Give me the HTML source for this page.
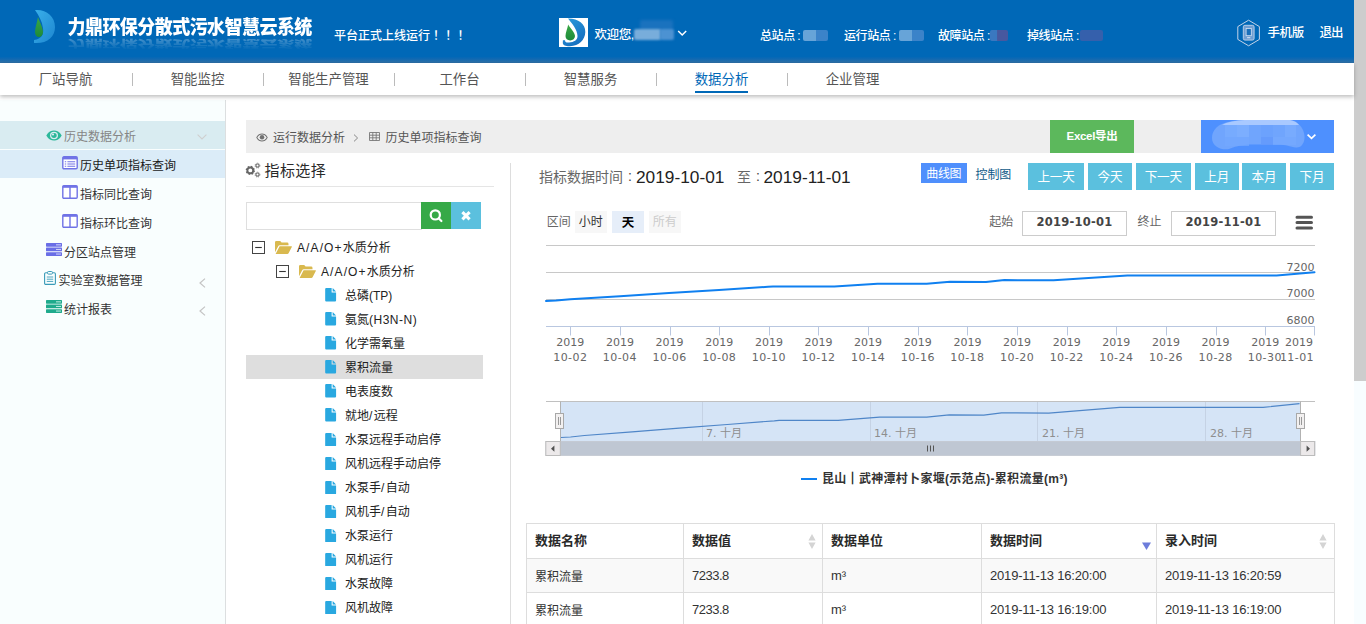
<!DOCTYPE html>
<html lang="zh-CN">
<head>
<meta charset="utf-8">
<title>力鼎环保分散式污水智慧云系统</title>
<style>
*{box-sizing:border-box;margin:0;padding:0}
html,body{width:1366px;height:624px;overflow:hidden;background:#fff}
body{position:relative;font-family:"Liberation Sans","Noto Sans CJK SC",sans-serif;font-size:13px;color:#393939}
.abs{position:absolute;white-space:nowrap}
/* header */
#hdr{position:absolute;left:0;top:0;width:1354px;height:63px;background:linear-gradient(#0068b7 0,#0068b7 56.5px,#1169b2 59px,#2a70a9 62px,#2b6ca3 63px)}
#hdr .t{position:absolute;color:#fff;white-space:nowrap;font-weight:500}
#hdr #title{left:67.5px;top:13px;font-size:18px;font-weight:900;line-height:30px;letter-spacing:-.55px;transform-origin:0 50%;transform:scale(1,1.07)}
#hdr #title2{left:67.5px;top:28px;font-size:18px;font-weight:900;line-height:30px;letter-spacing:-.55px;transform-origin:0 50%;transform:scale(1,-.55);opacity:.3;-webkit-mask-image:linear-gradient(to top,#000 15%,transparent 92%);mask-image:linear-gradient(to top,#000 15%,transparent 92%)}
.blur{position:absolute;border-radius:2px}
/* nav */
#nav{position:absolute;left:0;top:63px;width:1354px;height:32px;background:#fff;box-shadow:0 2px 4px rgba(0,0,0,.25);z-index:5}
#nav a{position:absolute;top:0;width:131px;height:32px;line-height:33px;text-align:center;font-size:13.4px;color:#555;text-decoration:none}
#nav i{position:absolute;top:10px;width:1px;height:13px;background:#bbb}
#nav a.on{color:#0068b7}
#nav a.on:after{content:"";position:absolute;left:39px;width:53px;top:28px;height:2px;background:#0068b7}
/* sidebar */
#side{position:absolute;left:0;top:100px;width:226px;height:524px;background:#f9fefe;border-right:1px solid #dcdfe0}
#side .r{position:absolute;left:0;margin-top:-5px;width:225px;height:29px;line-height:32px;font-size:12px;color:#333;white-space:nowrap}
#side svg{position:absolute}
/* main */
#crumb{position:absolute;left:246px;top:120px;width:1088px;height:33px;background:#eee;line-height:33px;font-size:13px;color:#555}
.tree .n{position:absolute;font-size:12px;color:#222;white-space:nowrap;line-height:25px;height:24px}
.btnc{position:absolute;top:163px;height:27px;line-height:29.5px;background:#5bc0de;color:#fff;font-size:12.6px;text-align:center;letter-spacing:-.2px}
table{border-collapse:collapse}
#tbl{position:absolute;left:526px;top:523px;width:807.5px;table-layout:fixed}
#tbl th,#tbl td{border:1px solid #ddd;height:34px;padding:0 0 0 8px;text-align:left;font-size:12px;color:#333;white-space:nowrap}
#tbl th{font-weight:bold;font-size:13px;height:35px;color:#2a2a2a;padding-bottom:3px}
#tbl td.n{font-size:13px;letter-spacing:-.18px}
#tbl td.v{font-size:13px;letter-spacing:-.5px}
</style>
</head>
<body>
<!-- ============ HEADER ============ -->
<div id="hdr">
  <svg class="abs" style="left:30px;top:8px" width="28" height="38" viewBox="0 0 28 38">
    <defs><linearGradient id="lg1" x1="0" y1="0" x2="1" y2="1"><stop offset="0" stop-color="#3ab0ea"/><stop offset="1" stop-color="#1d86d0"/></linearGradient>
    <linearGradient id="lg2" x1="0" y1="0" x2="0" y2="1"><stop offset="0" stop-color="#3aa845"/><stop offset="1" stop-color="#1d8a3a"/></linearGradient></defs>
    <path d="M5 2 C16 1 25 8 25 19 C25 29 17 36 4 35 L4 32 C12 31 14 26 13 20 C12 13 9 8 5 2 Z" fill="url(#lg1)"/>
    <path d="M8 9 C10 15 13 20 13 24 C13 27 11 29 9 29 C6.5 29 5 27 5 24 C5 20 7 15 8 9 Z" fill="url(#lg2)"/>
  </svg>
  <div class="t" id="title">力鼎环保分散式污水智慧云系统</div>
  <div class="t" id="title2">力鼎环保分散式污水智慧云系统</div>
  <div class="t" style="left:334px;top:27.3px;font-size:12px;line-height:18px">平台正式上线运行<span style="margin-left:3px;letter-spacing:.3px">！！！</span></div>
  <div class="abs" style="left:559px;top:18px;width:29px;height:29px;background:#fff"></div>
  <svg class="abs" style="left:559px;top:18px" width="29" height="29" viewBox="0 0 29 29">
    <defs><linearGradient id="lg3" x1="0" y1="0" x2=".6" y2="1"><stop offset="0" stop-color="#2b9bdc"/><stop offset="1" stop-color="#1670c0"/></linearGradient></defs>
    <path d="M9 .6 C19 .4 26.6 6 26.3 14 C26 22 20 28 11 28.2 C7 28.3 4 27.6 3.8 25 L3.9 22.2 L6 22.2 C6 24 7 24.7 10 24.5 C15 24.2 18.6 22 18.5 18 C18.4 12 13 5.4 9 .6 Z" fill="url(#lg3)"/>
    <path d="M9.2 6.4 C11 10 16 14.5 16 18 C16 20.8 13.8 22.4 11.2 22.4 C8.4 22.4 6.4 20.6 6.5 18 C6.6 14.5 8.6 10 9.2 6.4 Z" fill="url(#lg2)"/>
  </svg>
  <div class="t" style="left:594.5px;top:25.5px;font-size:12.5px;line-height:18px;letter-spacing:-.4px">欢迎您,</div>
  <div class="blur" style="left:640px;top:20px;width:33px;height:12px;background:#1a72be;filter:blur(1.5px)"></div><div class="blur" style="left:634px;top:29px;width:27px;height:11px;background:#78addb;filter:blur(.8px)"></div><div class="blur" style="left:660px;top:29px;width:14px;height:11px;background:#4c92d2;filter:blur(.8px)"></div>
  <svg class="abs" style="left:677px;top:29px" width="10" height="8" viewBox="0 0 10 8"><path d="M1.2 2 L5.2 6 L9.2 2" fill="none" stroke="#fff" stroke-width="1.5"/></svg>
  <div class="t" style="left:760px;top:27.4px;font-size:12px;line-height:18px;letter-spacing:-.4px">总站点<span style="margin-left:2.5px">:</span></div>
  <div class="blur" style="left:803px;top:29.5px;width:25px;height:11px;background:linear-gradient(90deg,#67a4d8 0,#67a4d8 50%,#3b83c9 54%,#3b83c9 100%);filter:blur(.5px)"></div>
  <div class="t" style="left:844px;top:27.4px;font-size:12px;line-height:18px;letter-spacing:-.4px">运行站点<span style="margin-left:2.5px">:</span></div>
  <div class="blur" style="left:898.5px;top:29.5px;width:25.5px;height:11px;background:linear-gradient(90deg,#67a4d8 0,#67a4d8 50%,#3b83c9 54%,#3b83c9 100%);filter:blur(.5px)"></div>
  <div class="t" style="left:938px;top:27.4px;font-size:12px;line-height:18px;letter-spacing:-.4px">故障站点<span style="margin-left:2.5px">:</span></div>
  <div class="blur" style="left:989.5px;top:29.5px;width:18.5px;height:11px;background:linear-gradient(90deg,#3a78c0 0,#3a78c0 36%,#47589f 42%,#47589f 100%);filter:blur(.5px)"></div>
  <div class="t" style="left:1027px;top:27.4px;font-size:12px;line-height:18px;letter-spacing:-.4px">掉线站点<span style="margin-left:2.5px">:</span></div>
  <div class="blur" style="left:1080px;top:29.5px;width:23px;height:11px;background:#3560ac;filter:blur(.6px)"></div>
  <svg class="abs" style="left:1235.5px;top:19px" width="26" height="28" viewBox="0 0 26 28">
    <path d="M12.6 1.2 L23.4 7.6 L23.4 20.4 L12.6 26.8 L1.8 20.4 L1.8 7.6 Z" fill="none" stroke="#c3d3e8" stroke-width="1"/>
    <rect x="7.3" y="6.3" width="10.8" height="14.8" rx="1.6" fill="#6f9fd3" stroke="#c3d4ea" stroke-width=".9"/>
    <rect x="10.1" y="9.5" width="5.2" height="7.2" fill="#1a6fba" stroke="#d5e2f2" stroke-width=".8"/>
    <path d="M11.1 18.7 H14.3" stroke="#e4edf8" stroke-width=".9"/>
  </svg>
  <div class="t" style="left:1267.5px;top:23.5px;font-size:12.5px;line-height:18px;letter-spacing:-.4px">手机版</div>
  <div class="t" style="left:1319.5px;top:23.5px;font-size:12.5px;line-height:18px;letter-spacing:-.9px">退出</div>
</div>
<!-- ============ NAV ============ -->
<div id="nav">
  <a style="left:0">厂站导航</a><i style="left:132px"></i>
  <a style="left:132px">智能监控</a><i style="left:263px"></i>
  <a style="left:263px">智能生产管理</a><i style="left:394px"></i>
  <a style="left:394px">工作台</a><i style="left:525px"></i>
  <a style="left:525px">智慧服务</a><i style="left:656px"></i>
  <a class="on" style="left:656px">数据分析</a><i style="left:787px"></i>
  <a style="left:787px">企业管理</a>
</div>
<!-- ============ SIDEBAR ============ -->
<div id="side">
  <div class="r" style="top:26px;height:28px;background:#d9ecf1;color:#858585"><svg style="left:46px;top:9px" width="16" height="11" viewBox="0 0 16 12" preserveAspectRatio="none"><path d="M0.3 6 C2.5 1.8 5.2 0.6 8 0.6 C10.8 0.6 13.5 1.8 15.7 6 C13.5 10.2 10.8 11.4 8 11.4 C5.2 11.4 2.5 10.2 0.3 6 Z M8 2 A4 4 0 1 0 8 10 A4 4 0 1 0 8 2 Z" fill="#2cb89a" fill-rule="evenodd"/><circle cx="8" cy="6" r="2.7" fill="#2cb89a"/><circle cx="7" cy="4.8" r="1.1" fill="#d9ecf1"/></svg><span class="abs" style="left:64px;top:0">历史数据分析</span><svg style="left:197px;top:13px" width="10" height="6" viewBox="0 0 10 6"><path d="M.6 .6 L5 5 L9.4 .6" fill="none" stroke="#cfcfcf" stroke-width="1.1"/></svg></div>
  <div class="r" style="top:55px;height:28px;background:#dbecf8;color:#1a1a1a"><svg style="left:62px;top:6px" width="16" height="14" viewBox="0 0 16 14"><rect x=".8" y=".8" width="14.4" height="12" rx="1.2" fill="#fff" stroke="#7073e6" stroke-width="1.4"/><rect x=".8" y=".8" width="14.4" height="2.6" fill="#7073e6"/><path d="M2.8 5.8 H4.2 M5.4 5.8 H13.2 M2.8 8 H4.2 M5.4 8 H13.2 M2.8 10.2 H4.2 M5.4 10.2 H13.2" stroke="#7073e6" stroke-width="1.1"/></svg><span class="abs" style="left:80px;top:0">历史单项指标查询</span></div>
  <div class="r" style="top:84px"><svg style="left:62px;top:6px" width="16" height="14" viewBox="0 0 16 14"><rect x=".8" y=".8" width="14.4" height="12.4" rx="1" fill="#fff" stroke="#7073e6" stroke-width="1.4"/><rect x=".8" y=".8" width="14.4" height="2" fill="#7073e6"/><path d="M8 2 V13" stroke="#7073e6" stroke-width="1.4"/></svg><span class="abs" style="left:80px;top:0">指标同比查询</span></div>
  <div class="r" style="top:113px"><svg style="left:62px;top:6px" width="16" height="14" viewBox="0 0 16 14"><rect x=".8" y=".8" width="14.4" height="12.4" rx="1" fill="#fff" stroke="#7073e6" stroke-width="1.4"/><rect x=".8" y=".8" width="14.4" height="2" fill="#7073e6"/><path d="M8 2 V13" stroke="#7073e6" stroke-width="1.4"/></svg><span class="abs" style="left:80px;top:0">指标环比查询</span></div>
  <div class="r" style="top:142px"><svg style="left:46px;top:6px" width="16" height="13" viewBox="0 0 16 13"><rect x="0" y="0" width="16" height="3.7" rx=".6" fill="#6a6ee6"/><rect x="0" y="4.6" width="16" height="3.7" rx=".6" fill="#6a6ee6"/><rect x="0" y="9.2" width="16" height="3.7" rx=".6" fill="#6a6ee6"/><path d="M10 1.85 H15 M10 6.45 H15 M10 11.05 H15" stroke="#dfe2ff" stroke-width=".9"/></svg><span class="abs" style="left:64px;top:0">分区站点管理</span></div>
  <div class="r" style="top:170px"><svg style="left:44px;top:6px" width="12" height="14" viewBox="0 0 12 14"><rect x=".6" y="1.8" width="10.8" height="11.6" rx="1.2" fill="none" stroke="#3a9bb8" stroke-width="1.1"/><rect x="3.6" y=".5" width="4.8" height="2.6" rx=".8" fill="#f9fefe" stroke="#3a9bb8" stroke-width="1"/><path d="M2.8 6 H9.2 M2.8 8.2 H9.2 M2.8 10.4 H9.2" stroke="#3a9bb8" stroke-width=".9"/></svg><span class="abs" style="left:58.5px;top:0">实验室数据管理</span><svg style="left:199px;top:13px" width="7" height="10" viewBox="0 0 7 10"><path d="M6 .6 L1 5 L6 9.4" fill="none" stroke="#c4c4c4" stroke-width="1.2"/></svg></div>
  <div class="r" style="top:199px"><svg style="left:46px;top:6px" width="16" height="13" viewBox="0 0 16 13"><rect x="0" y="0" width="16" height="3.7" rx=".6" fill="#1faa8c"/><rect x="0" y="4.6" width="16" height="3.7" rx=".6" fill="#1faa8c"/><rect x="0" y="9.2" width="16" height="3.7" rx=".6" fill="#1faa8c"/><path d="M10 1.85 H15 M10 6.45 H15 M10 11.05 H15" stroke="#d4f5ec" stroke-width=".9"/></svg><span class="abs" style="left:64px;top:0">统计报表</span><svg style="left:199px;top:12px" width="7" height="10" viewBox="0 0 7 10"><path d="M6 .6 L1 5 L6 9.4" fill="none" stroke="#c4c4c4" stroke-width="1.2"/></svg></div>
</div>
<!-- ============ MAIN ============ -->
<div id="main">
<div id="crumb">
  <svg class="abs" style="left:9.5px;top:12.5px" width="12" height="9" viewBox="0 0 16 12"><path d="M0.3 6 C2.5 1.8 5.2 0.6 8 0.6 C10.8 0.6 13.5 1.8 15.7 6 C13.5 10.2 10.8 11.4 8 11.4 C5.2 11.4 2.5 10.2 0.3 6 Z M8 2 C5.4 2 3.2 3.6 1.8 6 C3.2 8.4 5.4 10 8 10 C10.6 10 12.8 8.4 14.2 6 C12.8 3.6 10.6 2 8 2 Z" fill="#707070" fill-rule="evenodd"/><circle cx="8" cy="5.8" r="3" fill="#707070"/></svg>
  <span class="abs" style="left:27px;top:2px;font-size:12px">运行数据分析</span>
  <svg class="abs" style="left:107px;top:13.5px" width="6" height="8" viewBox="0 0 6 8"><path d="M1 .6 L4.6 4 L1 7.4" fill="none" stroke="#888" stroke-width="1"/></svg>
  <svg class="abs" style="left:122.5px;top:12px" width="11" height="9" viewBox="0 0 11 9"><path d="M.5 .5 H10.5 V8.5 H.5 Z M.5 3.2 H10.5 M.5 5.8 H10.5 M3.8 .5 V8.5 M7.2 .5 V8.5" fill="none" stroke="#777" stroke-width=".9"/></svg>
  <span class="abs" style="left:139.5px;top:2px;font-size:12px">历史单项指标查询</span>
</div>
<div class="abs" style="left:1050px;top:120px;width:84px;height:33px;background:#5cb85c;color:#fff;font-size:11.5px;font-weight:bold;text-align:center;line-height:33px;letter-spacing:-.3px">Excel导出</div>
<div class="abs" style="left:1201px;top:120px;width:133px;height:33px;background:#4e90fe"></div>
<svg class="abs" style="left:1201px;top:120px" width="133" height="33" viewBox="1201 120 133 33">
  <defs><filter id="bl1" x="-10%" y="-20%" width="120%" height="140%"><feGaussianBlur stdDeviation=".7"/></filter></defs>
  <path d="M1212 138 C1212 130 1218 124 1228 122 C1236 120 1244 120 1252 120 L1290 120 C1298 121 1304 128 1304.5 136 C1305 142 1302 148 1296 147.5 C1290 147 1286 144.5 1278 144.5 L1250 144.5 C1240 145 1234 147 1229 149 C1222 150.5 1212 147 1212 138 Z" fill="#6fa5fd" filter="url(#bl1)"/>
  <path d="M1226 123 C1234 120.5 1242 120 1252 120 L1290 120 C1294 120.5 1297 122.5 1299 125 L1222 125 Z" fill="#a9c9ff" filter="url(#bl1)"/>
  <rect x="1225" y="125" width="12" height="12" fill="#79acfe" opacity=".8"/><rect x="1237" y="125" width="12" height="12" fill="#7fb0fe" opacity=".8"/><rect x="1261" y="125" width="12" height="12" fill="#6ba1fc" opacity=".8"/><rect x="1285" y="125" width="11" height="12" fill="#7aadfe" opacity=".8"/>
  <rect x="1225" y="137" width="24" height="9" fill="#74a8fd" opacity=".7"/><rect x="1261" y="137" width="12" height="8" fill="#6399fb" opacity=".8"/><rect x="1273" y="137" width="23" height="8" fill="#76aafd" opacity=".7"/>
  <path d="M1307.6 134.6 L1311.5 138.3 L1315.4 134.6" fill="none" stroke="#fff" stroke-width="1.7"/>
</svg>
<!-- left tree panel -->
<svg class="abs" style="left:245px;top:162px" width="16" height="16" viewBox="0 0 16 16"><circle cx="5.3" cy="8.4" r="2.9" fill="none" stroke="#666" stroke-width="1.9"/><circle cx="5.3" cy="8.4" r="4" fill="none" stroke="#666" stroke-width="1.3" stroke-dasharray="1.7 1.44"/><circle cx="12.5" cy="3.6" r="1.6" fill="none" stroke="#777" stroke-width="1.2"/><circle cx="12.5" cy="3.6" r="2.4" fill="none" stroke="#777" stroke-width=".9" stroke-dasharray="1 .88"/><circle cx="12.5" cy="12.6" r="1.6" fill="none" stroke="#777" stroke-width="1.2"/><circle cx="12.5" cy="12.6" r="2.4" fill="none" stroke="#777" stroke-width=".9" stroke-dasharray="1 .88"/></svg>
<div class="abs" style="left:264.5px;top:159.5px;font-size:15px;line-height:22px;color:#2a2a2a;letter-spacing:.4px">指标选择</div>
<div class="abs" style="left:246px;top:186px;width:248px;height:1px;background:#e5e5e5"></div>
<div class="abs" style="left:246px;top:202px;width:176px;height:28px;border:1px solid #dfdfdf;background:#fff"></div>
<div class="abs" style="left:421px;top:202px;width:30px;height:27px;background:#36a947"></div>
<svg class="abs" style="left:428px;top:207px" width="16" height="16" viewBox="0 0 16 16"><circle cx="7.3" cy="7.9" r="4.6" fill="none" stroke="#fff" stroke-width="2.2"/><path d="M10.6 11.2 L13.4 14" stroke="#fff" stroke-width="2.2" stroke-linecap="round"/></svg>
<div class="abs" style="left:451px;top:202px;width:30px;height:27px;background:#5bc0de"></div>
<svg class="abs" style="left:460px;top:210px" width="12" height="12" viewBox="0 0 12 12"><path d="M2.4 2.2 L9.6 9.4 M9.6 2.2 L2.4 9.4" stroke="#fff" stroke-width="3.1" stroke-linecap="butt"/></svg>
<div class="abs" style="left:510px;top:163px;width:1px;height:461px;background:#ddd"></div>
<div class="tree">
  <div class="abs" style="left:246px;top:355px;width:237px;height:24px;background:#dedede"></div>
  <svg class="abs" style="left:252px;top:241px" width="13" height="13" viewBox="0 0 13 13"><rect x=".5" y=".5" width="12" height="12" fill="#fff" stroke="#444" stroke-width="1"/><path d="M3.2 6.5 H9.8" stroke="#333" stroke-width="1.1"/></svg><svg class="abs" style="left:275px;top:241px" width="17" height="13" viewBox="0 0 17 13"><path d="M0 1.3 A1.3 1.3 0 0 1 1.3 0 H5.2 L6.6 1.6 H12.2 A1.3 1.3 0 0 1 13.5 2.9 V4.2 H4.8 A1.8 1.8 0 0 0 3.2 5.2 L0 11.2 Z" fill="#d9b94f"/><path d="M4.6 5.2 H16.3 A.6 .6 0 0 1 16.8 6.1 L13.7 12.1 A1.6 1.6 0 0 1 12.3 13 H.6 Z" fill="#d9b94f"/></svg><div class="n" style="left:297px;top:235.5px"><span style="letter-spacing:1.1px">A/A/O+</span>水质分析</div>
  <svg class="abs" style="left:276.3px;top:265px" width="13" height="13" viewBox="0 0 13 13"><rect x=".5" y=".5" width="12" height="12" fill="#fff" stroke="#444" stroke-width="1"/><path d="M3.2 6.5 H9.8" stroke="#333" stroke-width="1.1"/></svg><svg class="abs" style="left:299px;top:265px" width="17" height="13" viewBox="0 0 17 13"><path d="M0 1.3 A1.3 1.3 0 0 1 1.3 0 H5.2 L6.6 1.6 H12.2 A1.3 1.3 0 0 1 13.5 2.9 V4.2 H4.8 A1.8 1.8 0 0 0 3.2 5.2 L0 11.2 Z" fill="#d9b94f"/><path d="M4.6 5.2 H16.3 A.6 .6 0 0 1 16.8 6.1 L13.7 12.1 A1.6 1.6 0 0 1 12.3 13 H.6 Z" fill="#d9b94f"/></svg><div class="n" style="left:321px;top:259.5px"><span style="letter-spacing:1.1px">A/A/O+</span>水质分析</div>
  <svg class="abs" style="left:325.3px;top:288.3px" width="11.8" height="13.5" viewBox="0 0 11 13"><path d="M1 0 H6.2 V4.3 H10.5 V12 A1 1 0 0 1 9.5 13 H1 A1 1 0 0 1 0 12 V1 A1 1 0 0 1 1 0 Z M7.2 0 L10.5 3.3 H7.2 Z" fill="#29a8e0"/></svg><div class="n" style="left:345px;top:283.6px">总磷(TP)</div>
  <svg class="abs" style="left:325.3px;top:312.3px" width="11.8" height="13.5" viewBox="0 0 11 13"><path d="M1 0 H6.2 V4.3 H10.5 V12 A1 1 0 0 1 9.5 13 H1 A1 1 0 0 1 0 12 V1 A1 1 0 0 1 1 0 Z M7.2 0 L10.5 3.3 H7.2 Z" fill="#29a8e0"/></svg><div class="n" style="left:345px;top:307.6px">氨氮<span style="letter-spacing:.5px">(H3N-N)</span></div>
  <svg class="abs" style="left:325.3px;top:336.4px" width="11.8" height="13.5" viewBox="0 0 11 13"><path d="M1 0 H6.2 V4.3 H10.5 V12 A1 1 0 0 1 9.5 13 H1 A1 1 0 0 1 0 12 V1 A1 1 0 0 1 1 0 Z M7.2 0 L10.5 3.3 H7.2 Z" fill="#29a8e0"/></svg><div class="n" style="left:345px;top:331.7px">化学需氧量</div>
  <svg class="abs" style="left:325.3px;top:360.4px" width="11.8" height="13.5" viewBox="0 0 11 13"><path d="M1 0 H6.2 V4.3 H10.5 V12 A1 1 0 0 1 9.5 13 H1 A1 1 0 0 1 0 12 V1 A1 1 0 0 1 1 0 Z M7.2 0 L10.5 3.3 H7.2 Z" fill="#29a8e0"/></svg><div class="n" style="left:345px;top:355.7px">累积流量</div>
  <svg class="abs" style="left:325.3px;top:384.4px" width="11.8" height="13.5" viewBox="0 0 11 13"><path d="M1 0 H6.2 V4.3 H10.5 V12 A1 1 0 0 1 9.5 13 H1 A1 1 0 0 1 0 12 V1 A1 1 0 0 1 1 0 Z M7.2 0 L10.5 3.3 H7.2 Z" fill="#29a8e0"/></svg><div class="n" style="left:345px;top:379.7px">电表度数</div>
  <svg class="abs" style="left:325.3px;top:408.4px" width="11.8" height="13.5" viewBox="0 0 11 13"><path d="M1 0 H6.2 V4.3 H10.5 V12 A1 1 0 0 1 9.5 13 H1 A1 1 0 0 1 0 12 V1 A1 1 0 0 1 1 0 Z M7.2 0 L10.5 3.3 H7.2 Z" fill="#29a8e0"/></svg><div class="n" style="left:345px;top:403.8px">就地<span style="letter-spacing:1.4px">/</span>远程</div>
  <svg class="abs" style="left:325.3px;top:432.5px" width="11.8" height="13.5" viewBox="0 0 11 13"><path d="M1 0 H6.2 V4.3 H10.5 V12 A1 1 0 0 1 9.5 13 H1 A1 1 0 0 1 0 12 V1 A1 1 0 0 1 1 0 Z M7.2 0 L10.5 3.3 H7.2 Z" fill="#29a8e0"/></svg><div class="n" style="left:345px;top:427.8px">水泵远程手动启停</div>
  <svg class="abs" style="left:325.3px;top:456.5px" width="11.8" height="13.5" viewBox="0 0 11 13"><path d="M1 0 H6.2 V4.3 H10.5 V12 A1 1 0 0 1 9.5 13 H1 A1 1 0 0 1 0 12 V1 A1 1 0 0 1 1 0 Z M7.2 0 L10.5 3.3 H7.2 Z" fill="#29a8e0"/></svg><div class="n" style="left:345px;top:451.8px">风机远程手动启停</div>
  <svg class="abs" style="left:325.3px;top:480.5px" width="11.8" height="13.5" viewBox="0 0 11 13"><path d="M1 0 H6.2 V4.3 H10.5 V12 A1 1 0 0 1 9.5 13 H1 A1 1 0 0 1 0 12 V1 A1 1 0 0 1 1 0 Z M7.2 0 L10.5 3.3 H7.2 Z" fill="#29a8e0"/></svg><div class="n" style="left:345px;top:475.8px">水泵手<span style="letter-spacing:1.4px">/</span>自动</div>
  <svg class="abs" style="left:325.3px;top:504.6px" width="11.8" height="13.5" viewBox="0 0 11 13"><path d="M1 0 H6.2 V4.3 H10.5 V12 A1 1 0 0 1 9.5 13 H1 A1 1 0 0 1 0 12 V1 A1 1 0 0 1 1 0 Z M7.2 0 L10.5 3.3 H7.2 Z" fill="#29a8e0"/></svg><div class="n" style="left:345px;top:499.9px">风机手<span style="letter-spacing:1.4px">/</span>自动</div>
  <svg class="abs" style="left:325.3px;top:528.6px" width="11.8" height="13.5" viewBox="0 0 11 13"><path d="M1 0 H6.2 V4.3 H10.5 V12 A1 1 0 0 1 9.5 13 H1 A1 1 0 0 1 0 12 V1 A1 1 0 0 1 1 0 Z M7.2 0 L10.5 3.3 H7.2 Z" fill="#29a8e0"/></svg><div class="n" style="left:345px;top:523.9px">水泵运行</div>
  <svg class="abs" style="left:325.3px;top:552.6px" width="11.8" height="13.5" viewBox="0 0 11 13"><path d="M1 0 H6.2 V4.3 H10.5 V12 A1 1 0 0 1 9.5 13 H1 A1 1 0 0 1 0 12 V1 A1 1 0 0 1 1 0 Z M7.2 0 L10.5 3.3 H7.2 Z" fill="#29a8e0"/></svg><div class="n" style="left:345px;top:547.9px">风机运行</div>
  <svg class="abs" style="left:325.3px;top:576.7px" width="11.8" height="13.5" viewBox="0 0 11 13"><path d="M1 0 H6.2 V4.3 H10.5 V12 A1 1 0 0 1 9.5 13 H1 A1 1 0 0 1 0 12 V1 A1 1 0 0 1 1 0 Z M7.2 0 L10.5 3.3 H7.2 Z" fill="#29a8e0"/></svg><div class="n" style="left:345px;top:572.0px">水泵故障</div>
  <svg class="abs" style="left:325.3px;top:600.7px" width="11.8" height="13.5" viewBox="0 0 11 13"><path d="M1 0 H6.2 V4.3 H10.5 V12 A1 1 0 0 1 9.5 13 H1 A1 1 0 0 1 0 12 V1 A1 1 0 0 1 1 0 Z M7.2 0 L10.5 3.3 H7.2 Z" fill="#29a8e0"/></svg><div class="n" style="left:345px;top:596.0px">风机故障</div>
</div>
<!-- right panel -->
<div class="abs" style="left:539px;top:166px;font-size:14px;line-height:22px;color:#666">指标数据时间<span style="display:inline-block;width:14px;text-align:center;position:relative;top:-1px;color:#444">:</span></div>
<div class="abs" style="left:636px;top:165px;font-size:17.3px;line-height:24px;color:#222">2019-10-01</div>
<div class="abs" style="left:737px;top:166px;font-size:14px;line-height:22px;color:#666">至<span style="display:inline-block;width:14px;text-align:center;position:relative;top:-1px;color:#444">:</span></div>
<div class="abs" style="left:763.5px;top:165px;font-size:17.3px;line-height:24px;color:#222">2019-11-01</div>
<div class="abs" style="left:921px;top:163px;width:45.5px;height:20px;background:#4f8ffc;color:#fff;font-size:12px;line-height:22.5px;text-align:center;letter-spacing:-.3px">曲线图</div>
<div class="abs" style="left:975.5px;top:166px;font-size:12px;line-height:19px;color:#0f5a88;letter-spacing:-.1px">控制图</div>
<div class="btnc" style="left:1028px;width:56px">上一天</div>
<div class="btnc" style="left:1088px;width:44px">今天</div>
<div class="btnc" style="left:1135.5px;width:55.5px">下一天</div>
<div class="btnc" style="left:1195px;width:43.5px">上月</div>
<div class="btnc" style="left:1242px;width:44px">本月</div>
<div class="btnc" style="left:1290px;width:44px">下月</div>
<svg class="abs" style="left:526px;top:200px" width="808" height="310" viewBox="526 200 808 310" font-family="'DejaVu Sans','Noto Sans CJK SC',sans-serif">
  <!-- range selector -->
  <text x="546.7" y="226.2" font-size="12" fill="#666" font-family="'Liberation Sans','Noto Sans CJK SC',sans-serif">区间</text>
  <rect x="575" y="211" width="32" height="22" fill="#f7f7f7"/>
  <text x="590.7" y="226.2" font-size="12" fill="#333" text-anchor="middle" font-family="'Liberation Sans','Noto Sans CJK SC',sans-serif">小时</text>
  <rect x="612" y="211" width="32" height="22" fill="#e6eef9"/>
  <text x="628" y="226.5" font-size="12.5" fill="#000" font-weight="bold" text-anchor="middle" font-family="'Liberation Sans','Noto Sans CJK SC',sans-serif">天</text>
  <rect x="649" y="211" width="32" height="22" fill="#f7f7f7"/>
  <text x="664.7" y="226.2" font-size="12" fill="#ccc" text-anchor="middle" font-family="'Liberation Sans','Noto Sans CJK SC',sans-serif">所有</text>
  <text x="989.3" y="226.2" font-size="12" fill="#666" font-family="'Liberation Sans','Noto Sans CJK SC',sans-serif">起始</text>
  <rect x="1022.5" y="211.5" width="104" height="24" fill="#fff" stroke="#ccc"/>
  <text x="1074.5" y="226.3" font-size="11.5" fill="#444" font-weight="bold" text-anchor="middle" letter-spacing=".25">2019-10-01</text>
  <text x="1137.6" y="226.2" font-size="12" fill="#666" font-family="'Liberation Sans','Noto Sans CJK SC',sans-serif">终止</text>
  <rect x="1171.5" y="211.5" width="104" height="24" fill="#fff" stroke="#ccc"/>
  <text x="1223.5" y="226.3" font-size="11.5" fill="#444" font-weight="bold" text-anchor="middle" letter-spacing=".25">2019-11-01</text>
  <path d="M1297 217.3 H1311.5 M1297 222.6 H1311.5 M1297 227.9 H1311.5" stroke="#555" stroke-width="3" stroke-linecap="round"/>
  <!-- grid -->
  <path d="M546 245.5 H1315 M546 272.5 H1315 M546 299.5 H1315" stroke="#c8c8c8" stroke-width="1" fill="none"/>
  <path d="M546 326.5 H1315" stroke="#b9c7e0" stroke-width="1" fill="none"/>
  <g stroke="#b9c7e0" stroke-width="1" fill="none"><path d="M570.5 326.5 V335.5"/><path d="M620.5 326.5 V335.5"/><path d="M670.5 326.5 V335.5"/><path d="M719.5 326.5 V335.5"/><path d="M769.5 326.5 V335.5"/><path d="M818.5 326.5 V335.5"/><path d="M868.5 326.5 V335.5"/><path d="M918.5 326.5 V335.5"/><path d="M967.5 326.5 V335.5"/><path d="M1017.5 326.5 V335.5"/><path d="M1067.5 326.5 V335.5"/><path d="M1116.5 326.5 V335.5"/><path d="M1166.5 326.5 V335.5"/><path d="M1216.5 326.5 V335.5"/><path d="M1265.5 326.5 V335.5"/><path d="M1314.5 326.5 V335.5"/></g>
  <g font-size="11" fill="#666"><text x="570.3" y="346" text-anchor="middle">2019</text><text x="570.3" y="361" text-anchor="middle" letter-spacing=".42">10-02</text><text x="619.9" y="346" text-anchor="middle">2019</text><text x="619.9" y="361" text-anchor="middle" letter-spacing=".42">10-04</text><text x="669.6" y="346" text-anchor="middle">2019</text><text x="669.6" y="361" text-anchor="middle" letter-spacing=".42">10-06</text><text x="719.2" y="346" text-anchor="middle">2019</text><text x="719.2" y="361" text-anchor="middle" letter-spacing=".42">10-08</text><text x="768.9" y="346" text-anchor="middle">2019</text><text x="768.9" y="361" text-anchor="middle" letter-spacing=".42">10-10</text><text x="818.5" y="346" text-anchor="middle">2019</text><text x="818.5" y="361" text-anchor="middle" letter-spacing=".42">10-12</text><text x="868.1" y="346" text-anchor="middle">2019</text><text x="868.1" y="361" text-anchor="middle" letter-spacing=".42">10-14</text><text x="917.8" y="346" text-anchor="middle">2019</text><text x="917.8" y="361" text-anchor="middle" letter-spacing=".42">10-16</text><text x="967.4" y="346" text-anchor="middle">2019</text><text x="967.4" y="361" text-anchor="middle" letter-spacing=".42">10-18</text><text x="1017.1" y="346" text-anchor="middle">2019</text><text x="1017.1" y="361" text-anchor="middle" letter-spacing=".42">10-20</text><text x="1066.7" y="346" text-anchor="middle">2019</text><text x="1066.7" y="361" text-anchor="middle" letter-spacing=".42">10-22</text><text x="1116.3" y="346" text-anchor="middle">2019</text><text x="1116.3" y="361" text-anchor="middle" letter-spacing=".42">10-24</text><text x="1166.0" y="346" text-anchor="middle">2019</text><text x="1166.0" y="361" text-anchor="middle" letter-spacing=".42">10-26</text><text x="1215.6" y="346" text-anchor="middle">2019</text><text x="1215.6" y="361" text-anchor="middle" letter-spacing=".42">10-28</text><text x="1265.3" y="346" text-anchor="middle">2019</text><text x="1264.8" y="361" text-anchor="middle" letter-spacing=".42">10-30</text><text x="1313" y="346" text-anchor="end">2019</text><text x="1314" y="361" text-anchor="end" letter-spacing=".42">11-01</text></g>
  <g font-size="11" fill="#666" text-anchor="end"><text x="1314.5" y="271">7200</text><text x="1314.5" y="297">7000</text><text x="1314.5" y="324">6800</text></g>
  <path d="M546.0 301.0 L556.0 300.6 L570.3 299.3 L620.0 296.2 L669.0 293.1 L719.0 290.0 L768.0 286.8 L773.0 286.4 L834.4 286.4 L877.5 283.7 L926.7 283.7 L950.0 281.7 L986.0 282.1 L1004.4 280.1 L1053.6 280.3 L1127.4 275.4 L1276.6 275.4 L1314.5 272.3" fill="none" stroke="#1080f0" stroke-width="2" stroke-linejoin="round" stroke-linecap="round"/>
  <!-- navigator -->
  <rect x="561" y="402" width="739.5" height="39.5" fill="#d5e4f6"/>
  <path d="M702.5 402 V441 M870.5 402 V441 M1037.5 402 V441 M1205.5 402 V441" stroke="#c5d2e4" stroke-width="1"/>
  <path d="M561.0 437.5 L570.6 437.0 L584.4 435.5 L632.1 431.8 L679.2 428.2 L727.3 424.5 L774.3 420.8 L779.1 420.3 L838.1 420.3 L879.6 417.1 L926.8 417.1 L949.2 414.8 L983.8 415.2 L1001.5 412.9 L1048.8 413.1 L1119.7 407.4 L1263.1 407.4 L1299.5 403.7" fill="none" stroke="#4f86c8" stroke-width="1.2"/>
  <path d="M546 401.5 H1315" stroke="#c0c0c0" stroke-width="1"/>
  <path d="M560.5 401.5 V441 M1300.5 401.5 V441" stroke="#b2b2b2" stroke-width="1"/>
  <g font-size="11" fill="#8e8e8e"><text x="706" y="437">7. 十月</text><text x="874" y="437">14. 十月</text><text x="1042" y="437">21. 十月</text><text x="1210" y="437">28. 十月</text></g>
  <rect x="555.5" y="413.5" width="8" height="15" fill="#f2f0f0" stroke="#a8a8a8"/>
  <path d="M558.5 417 V425 M560.5 417 V425" stroke="#999" stroke-width="1"/>
  <rect x="1296.5" y="413.5" width="8" height="15" fill="#f2f0f0" stroke="#a8a8a8"/>
  <path d="M1299.5 417 V425 M1301.5 417 V425" stroke="#999" stroke-width="1"/>
  <!-- scrollbar -->
  <rect x="546" y="441.5" width="769" height="14" fill="#bfc7d3" stroke="#b9bec8" stroke-width=".6"/>
  <rect x="545.8" y="441.5" width="14.5" height="14" fill="#ece9ea" stroke="#bcbcbc"/>
  <rect x="1300.6" y="441.5" width="14" height="14" fill="#ece9ea" stroke="#bcbcbc"/>
  <path d="M554.4 445.6 V451.8 L551 448.7 Z M1306.6 445.6 V451.8 L1310 448.7 Z" fill="#505050"/>
  <path d="M927.5 445.5 V451.5 M930.5 445.5 V451.5 M933.5 445.5 V451.5" stroke="#555" stroke-width="1"/>
  <!-- legend -->
  <path d="M801 479 H817" stroke="#1080f0" stroke-width="2"/>
  <text x="822" y="483.3" font-size="12" font-weight="bold" fill="#333" letter-spacing=".3" font-family="'Liberation Sans','Noto Sans CJK SC',sans-serif">昆山<tspan stroke="#333" stroke-width=".7">｜</tspan>武神潭村卜家堰(示范点)-累积流量(m³)</text>
</svg>
<table id="tbl">
<colgroup><col style="width:157px"><col style="width:139px"><col style="width:159px"><col style="width:175px"><col style="width:178px"></colgroup>
<tr><th>数据名称</th><th>数据值</th><th>数据单位</th><th>数据时间</th><th>录入时间</th></tr>
<tr style="background:#f9f9f9"><td>累积流量</td><td class="v">7233.8</td><td class="n">m³</td><td class="n">2019-11-13 16:20:00</td><td class="n">2019-11-13 16:20:59</td></tr>
<tr><td>累积流量</td><td class="v">7233.8</td><td class="n">m³</td><td class="n">2019-11-13 16:19:00</td><td class="n">2019-11-13 16:19:00</td></tr>
</table>
<svg class="abs" style="left:808px;top:534px" width="8" height="15" viewBox="0 0 8 15"><path d="M4 0 L7.6 6.4 H.4 Z M4 15 L7.6 8.6 H.4 Z" fill="#d4d4d4"/></svg>
<svg class="abs" style="left:1319px;top:534px" width="8" height="15" viewBox="0 0 8 15"><path d="M4 0 L7.6 6.4 H.4 Z M4 15 L7.6 8.6 H.4 Z" fill="#d4d4d4"/></svg>
<svg class="abs" style="left:1142px;top:542px" width="9" height="8" viewBox="0 0 9 8"><path d="M0 .5 H9 L4.5 8 Z" fill="#6d7ddb"/></svg>
</div>
<!-- scrollbar -->
<div class="abs" style="left:1354px;top:0;width:12px;height:624px;background:#f8fdff"></div>
<div class="abs" style="left:1354px;top:0;width:12px;height:381px;background:#cdcdcd"></div>
</body>
</html>
